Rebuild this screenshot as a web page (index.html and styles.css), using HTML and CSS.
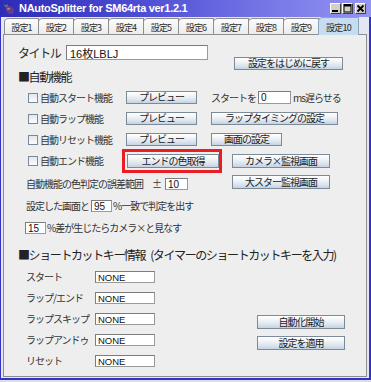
FILE: index.html
```html
<!DOCTYPE html>
<html lang="ja">
<head>
<meta charset="utf-8">
<title>NAutoSplitter</title>
<link rel="stylesheet" href="styles.css">
</head>
<body>
<div class="window">
  <div class="titlebar">
    <svg class="app-icon" width="12" height="12" viewBox="0 0 12 12">
      <ellipse cx="6.8" cy="7" rx="4.6" ry="3.6" transform="rotate(40 6.8 7)" fill="#6b3a8c"/>
      <ellipse cx="5.6" cy="5.8" rx="1.6" ry="1" fill="#a47cc0"/>
      <path d="M0.5 1.5 L3.5 2.2 L4.8 0.8 L4.8 3.6 L2.6 4.6 Z" fill="#3f9a2e"/>
    </svg>
    <span class="title">NAutoSplitter for SM64rta ver1.2.1</span>
    <div class="win-btns">
      <span class="wb"><svg width="9" height="9" viewBox="0 0 9 9"><rect x="1" y="6" width="6" height="2" fill="#000"/></svg></span>
      <span class="wb"><svg width="9" height="9" viewBox="0 0 9 9"><rect x="1" y="0.5" width="7" height="7.5" fill="none" stroke="#000" stroke-width="1"/><rect x="1" y="0.5" width="7" height="2" fill="#000"/></svg></span>
      <span class="wb wb-close"><svg width="9" height="9" viewBox="0 0 9 9"><path d="M1.5 1.5 L7.5 7.5 M7.5 1.5 L1.5 7.5" stroke="#000" stroke-width="1.8"/></svg></span>
    </div>
  </div>
  <div class="tabs">
    <div class="tab">設定1</div>
    <div class="tab">設定2</div>
    <div class="tab">設定3</div>
    <div class="tab">設定4</div>
    <div class="tab">設定5</div>
    <div class="tab">設定6</div>
    <div class="tab">設定7</div>
    <div class="tab">設定8</div>
    <div class="tab">設定9</div>
    <div class="tab tab-active">設定10</div>
  </div>
  <div class="panel">
    <div class="row row-title">
      <span class="lbl-title">タイトル</span>
      <input class="field field-title" type="text" value="16枚LBLJ">
    </div>
    <div class="row row-reset">
      <button class="btn btn-reset">設定をはじめに戻す</button>
    </div>
    <div class="heading">■自動機能</div>

    <div class="row row-func r1">
      <span class="chk"></span>
      <span class="txt func-lbl">自動スタート機能</span>
      <button class="btn btn-preview">プレビュー</button>
      <span class="txt after-preview">スタートを</span>
      <input class="field field-ms" type="text" value="0">
      <span class="txt ms">ms遅らせる</span>
    </div>
    <div class="row row-func r2">
      <span class="chk"></span>
      <span class="txt func-lbl">自動ラップ機能</span>
      <button class="btn btn-preview">プレビュー</button>
      <button class="btn btn-lapset after-preview">ラップタイミングの設定</button>
    </div>
    <div class="row row-func r3">
      <span class="chk"></span>
      <span class="txt func-lbl">自動リセット機能</span>
      <button class="btn btn-preview">プレビュー</button>
      <button class="btn btn-screen after-preview">画面の設定</button>
    </div>
    <div class="row row-end">
      <span class="chk"></span>
      <span class="txt func-lbl">自動エンド機能</span>
      <div class="highlight">
        <button class="btn btn-endcolor">エンドの色取得</button>
      </div>
      <button class="btn btn-camera">カメラ×監視画面</button>
    </div>
    <div class="row row-range">
      <div class="range-group">
        <span class="txt">自動機能の色判定の誤差範囲</span>
        <span class="txt pm">±</span>
        <input class="field field-small" type="text" value="10">
      </div>
      <button class="btn btn-star">大スター監視画面</button>
    </div>
    <div class="row row-match">
      <span class="txt">設定した画面と</span>
      <input class="field field-num" type="text" value="95">
      <span class="txt pct">%一致で判定を出す</span>
    </div>
    <div class="row row-diff">
      <input class="field field-num" type="text" value="15">
      <span class="txt pct">%差が生じたらカメラ×と見なす</span>
    </div>
    <div class="heading heading2">■ショートカットキー情報<span class="gap"> </span>(タイマーのショートカットキーを入力)</div>

    <div class="shortcuts">
      <div class="sc-list">
        <div class="sc-row"><span class="txt sc-lbl">スタート</span><input class="field field-key" type="text" value="NONE"></div>
        <div class="sc-row"><span class="txt sc-lbl">ラップ/エンド</span><input class="field field-key" type="text" value="NONE"></div>
        <div class="sc-row"><span class="txt sc-lbl">ラップスキップ</span><input class="field field-key" type="text" value="NONE"></div>
        <div class="sc-row"><span class="txt sc-lbl">ラップアンドゥ</span><input class="field field-key" type="text" value="NONE"></div>
        <div class="sc-row"><span class="txt sc-lbl">リセット</span><input class="field field-key" type="text" value="NONE"></div>
      </div>
      <div class="sc-actions">
        <button class="btn btn-action">自動化開始</button>
        <button class="btn btn-action btn-apply">設定を適用</button>
      </div>
    </div>
  </div>
</div>
</body>
</html>
```

FILE: styles.css
```css
* { box-sizing: border-box; }

html, body {
  margin: 0;
  padding: 0;
  background: #dcdcec;
}

body {
  width: 371px;
  height: 382px;
  overflow: hidden;
  font-family: "Noto Sans CJK JP", "Liberation Sans", sans-serif;
  color: #333;
}

.window {
  width: 371px;
  height: 380px;
  display: flex;
  flex-direction: column;
  background: #e6e6f2;
  border-left: 1px solid #3434c4;
  border-right: 2px solid #3434c4;
  border-bottom: 2px solid #3434c4;
}

/* title bar */
.titlebar {
  height: 17px;
  flex: none;
  display: flex;
  align-items: center;
  background: linear-gradient(to right, #2c2cb8 0%, #4a4ad2 35%, #7474e6 70%, #9494f2 100%);
  margin-left: -1px;
  margin-right: -2px;
  padding-left: 3px;
}

.app-icon {
  flex: none;
  display: block;
}

.title {
  margin-left: 4px;
  color: #fff;
  font-family: "Liberation Sans", "DejaVu Sans", sans-serif;
  font-weight: bold;
  font-size: 11px;
  letter-spacing: -0.3px;
  line-height: 17px;
  white-space: nowrap;
}

.win-btns {
  margin-left: auto;
  margin-right: 5px;
  display: flex;
  gap: 1px;
}

.wb {
  width: 11px;
  height: 11px;
  display: flex;
  align-items: center;
  justify-content: center;
  background: #d4d0c8;
  border-top: 1px solid #fff;
  border-left: 1px solid #fff;
  border-right: 1px solid #404040;
  border-bottom: 1px solid #404040;
}

.wb-close { margin-left: 1px; }

.wb svg { display: block; }

/* tabs */
.tabs {
  height: 17px;
  flex: none;
  display: flex;
  align-items: flex-end;
  padding-left: 3px;
  position: relative;
  z-index: 1;
}

.tab {
  width: 35px;
  height: 16px;
  flex: none;
  display: flex;
  align-items: center;
  justify-content: center;
  font-size: 9px;
  letter-spacing: -0.8px;
  color: #2a2a2a;
  background: linear-gradient(#fbfbfb, #ececec);
  border: 1px solid #8e8e8e;
  border-bottom: none;
  border-top-left-radius: 5px 4px;
  padding-top: 1px;
}

.tab + .tab { margin-left: -1px; width: 36px; }

.tab-active {
  width: 41px !important;
  height: 18px;
  margin-bottom: -1px;
  background: #c6dcf1;
  border-color: #8aa4bd;
}

/* panel */
.panel {
  height: 343px;
  flex: none;
  margin-left: 2px;
  margin-right: 2px;
  background: #eeeeee;
  border: 1px solid #8e8e8e;
  display: flex;
  flex-direction: column;
}

.row {
  display: flex;
  align-items: center;
  flex: none;
}

.txt {
  font-size: 10px;
  letter-spacing: -1px;
  line-height: 12px;
  white-space: nowrap;
  color: #333;
}

.field {
  display: block;
  margin: 0;
  padding: 0 0 0 2px;
  background: #fff;
  border: 1px solid #9a9a9a;
  border-top-color: #7c7c7c;
  border-left-color: #7c7c7c;
  font-family: "Liberation Sans", "Noto Sans CJK JP", sans-serif;
  font-size: 10px;
  color: #111;
  outline: none;
}

.btn {
  display: flex;
  align-items: center;
  justify-content: center;
  margin: 0;
  padding: 0 0 1px 0;
  height: 13px;
  border: 1px solid #7d8a98;
  background: linear-gradient(#ffffff 0%, #f1f4f8 35%, #d9e2ec 75%, #c3d2e2 100%);
  font-family: "Noto Sans CJK JP", sans-serif;
  font-size: 10px;
  letter-spacing: -1px;
  line-height: 12px;
  color: #222;
  white-space: nowrap;
  flex: none;
}

/* title row */
.row-title {
  margin-top: 10px;
  padding-left: 14px;
}

.lbl-title {
  width: 48px;
  font-size: 12px;
  letter-spacing: -1.4px;
  line-height: 15px;
  color: #2a2a2a;
}

.field-title {
  width: 142px;
  height: 15px;
  font-size: 11px;
  padding-left: 3px;
}

.row-reset {
  margin-top: -3px;
  padding-left: 230px;
}

.btn-reset { width: 109px; }

.heading {
  flex: none;
  height: 14px;
  line-height: 14px;
  padding-left: 14px;
  font-size: 12px;
  letter-spacing: -1.4px;
  color: #222;
  white-space: nowrap;
}

.gap {
  display: inline-block;
  width: 5px;
}

/* function rows */
.row-func { height: 13px; }
.r1 { margin-top: 7px; }
.r2, .r3 { margin-top: 8px; }

.chk {
  width: 10px;
  height: 10px;
  margin-left: 24px;
  flex: none;
  border: 1px solid #7b8896;
  background: linear-gradient(#e2e7ee, #fbfcfd);
}

.func-lbl {
  width: 86px;
  margin-left: 2px;
  flex: none;
}

.btn-preview { width: 71px; height: 13px; }

.after-preview { margin-left: 14px; }

.field-ms {
  width: 33px;
  height: 13px;
  margin-left: 2px;
}

.ms { margin-left: 2px; }

.btn-lapset { width: 127px; }
.btn-screen { width: 71px; }

.row-end {
  margin-top: 3px;
  height: 24px;
}

.highlight {
  margin-left: -4px;
  height: 24px;
  width: 100px;
  flex: none;
  border: 3px solid #ea1c24;
  display: flex;
  align-items: center;
  padding-left: 2px;
}

.btn-endcolor { width: 92px; height: 14px; }

.btn-camera {
  width: 98px;
  height: 14px;
  margin-left: 10px;
}

/* range row */
.row-range {
  margin-top: 2px;
  height: 15px;
  align-items: flex-start;
}

.range-group {
  width: 206px;
  margin-left: 22px;
  margin-top: 3px;
  display: flex;
  align-items: center;
  flex: none;
}

.pm { margin-left: 9px; }

.field-small {
  width: 23px;
  height: 12px;
  margin-left: 4px;
}

.btn-star { width: 98px; height: 14px; }

.row-match {
  margin-top: 10px;
  height: 12px;
  padding-left: 22px;
}

.field-num {
  width: 21px;
  height: 12px;
  margin-left: 2px;
}

.pct { margin-left: 1px; }

.row-diff {
  margin-top: 10px;
  height: 12px;
  padding-left: 19px;
}

.heading2 { margin-top: 14px; }

/* shortcuts */
.shortcuts {
  margin-top: 9px;
  display: flex;
  flex: none;
}

.sc-list {
  display: flex;
  flex-direction: column;
  gap: 9px;
  padding-left: 22px;
}

.sc-row {
  display: flex;
  align-items: center;
  height: 12px;
}

.sc-lbl { width: 69px; flex: none; }

.field-key {
  width: 60px;
  height: 12px;
  font-size: 9.5px;
}

.sc-actions {
  margin-left: 102px;
  padding-top: 44px;
  display: flex;
  flex-direction: column;
}

.btn-action { width: 88px; height: 14px; }
.btn-apply { margin-top: 7px; }
```
